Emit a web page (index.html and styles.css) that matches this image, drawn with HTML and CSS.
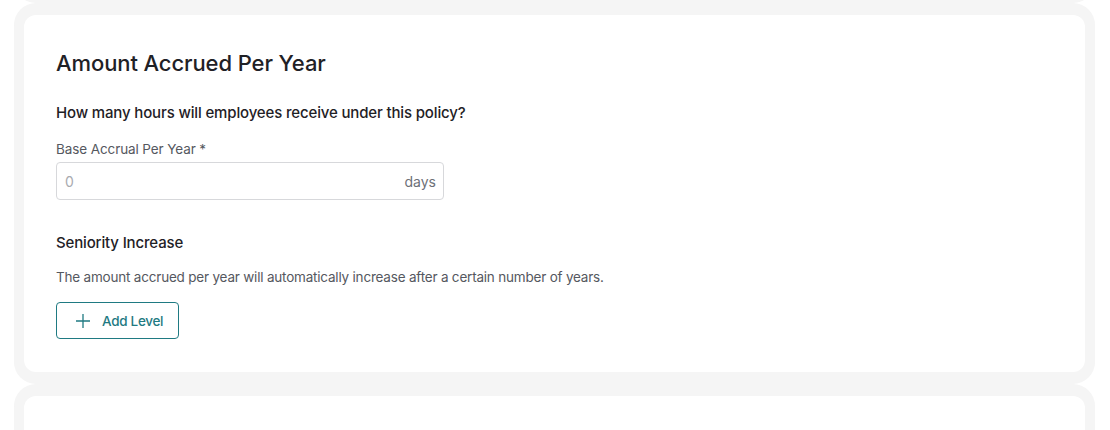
FILE: index.html
```html
<!doctype html>
<html lang=en>
<head>
<meta charset=utf-8>
<title>Accrual policy</title>
<link rel="stylesheet" href="styles.css">
</head>
<body>

<div class="stack">

	<!-- previous section, scrolled mostly out of view -->
	<section class="card stub"></section>

	<!-- amount accrued -->
	<section class="card">
		<h2 class="card-title">Amount Accrued Per Year</h2>
		<h3 class="question">How many hours will employees receive under this policy?</h3>

		<label class="field">
			<span class="field-label">Base Accrual Per Year *</span>
			<span class="input-wrap">
				<input type="text" class="input" placeholder="0">
				<span class="suffix">days</span>
			</span>
		</label>

		<h3 class="subhead">Seniority Increase</h3>
		<p class="hint">The amount accrued per year will automatically increase after a certain number of years.</p>

		<button type="button" class="btn-outline">
			<svg width="14" height="14" viewBox="0 0 14 14" fill="none" stroke="currentColor" stroke-width="1.3"><path d="M7 0v14M0 7h14"/></svg>
			Add Level
		</button>
	</section>

	<!-- next section -->
	<section class="card next"></section>

</div>

</body>
</html>
```

FILE: styles.css
```css
/* ====  Base  ==== */

* {
	box-sizing: border-box;
}

html, body {
	margin:     0;
	background: white;
	overflow:   hidden;
}

body {
	font-family: Inter, "Open Sans", Helvetica, Arial, sans-serif;
	color:       #1f2126;
	padding:     0 25px 0 24px;
	height:      430px;
}

.stack {
	display:        flex;
	flex-direction: column;
	gap:            24px;
	margin-top:     -73px;
}


/* ====  Cards  ==== */

.card {
	background:    white;
	border-radius: 12px;
	padding:       33px 32px 33px;
	/* grey frame: 10px at the sides, 12px above and below so neighbours meet */
	box-shadow:    0 0 0 10px #f5f5f5,
	               0 2px 0 10px #f5f5f5,
	               0 -2px 0 10px #f5f5f5,
	               0 2px 3px 1px rgba(0, 0, 0, 0.10);
}

.card.stub,
.card.next {
	height:  64px;
	padding: 0;
}

.card-title {
	margin:         0 0 24px;
	font-size:      22px;
	font-weight:    500;
	letter-spacing: -0.1px;
	line-height:    30px;
}

.question,
.subhead {
	margin:         0;
	font-size:      15px;
	font-weight:    500;
	letter-spacing: -0.15px;
	line-height:    22px;
}


/* ====  Field  ==== */

.field {
	display:        flex;
	flex-direction: column;
	gap:            3px;
	margin:         15px 0 32px;
	width:          388px;
}

.field-label {
	font-size:      13.5px;
	letter-spacing: -0.1px;
	color:          #555860;
	line-height:    20px;
}

.input-wrap {
	display:       flex;
	align-items:   center;
	height:        38px;
	border:        1px solid #d7d8db;
	border-radius: 4px;
	padding:       0 7px 0 8px;
}

.input {
	flex:       1;
	border:     0;
	outline:    0;
	font:       inherit;
	font-size:  14px;
	color:      #1f2126;
	background: transparent;
	padding:    0;
}

.input::placeholder {
	color: #a9abb0;
}

.suffix {
	font-size: 14px;
	color:     #6d7077;
}


/* ====  Seniority  ==== */

.hint {
	margin:         13px 0 15px;
	font-size:      13.5px;
	letter-spacing: -0.2px;
	color:          #555860;
	line-height:    20px;
}

.btn-outline {
	display:        flex;
	align-items:    center;
	gap:            12px;
	height:         37px;
	padding:        0 15px 0 19px;
	border:         1.5px solid #1f7a82;
	border-radius:  4px;
	background:     white;
	color:          #1f7a82;
	font:           inherit;
	font-size:      13.5px;
	font-weight:    500;
	letter-spacing: -0.3px;
}
```
